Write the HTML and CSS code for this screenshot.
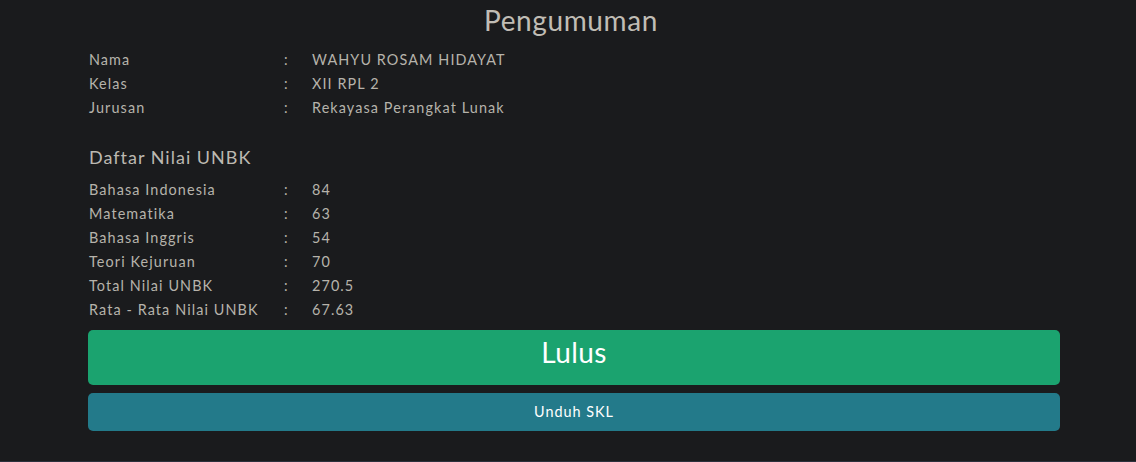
FILE: index.html
```html
<!DOCTYPE html>
<html lang="id">
<head>
<meta charset="utf-8">
<title>Pengumuman</title>
<link rel="stylesheet" href="styles.css">
</head>
<body>
<main class="page">
  <h1 class="title">Pengumuman</h1>
  <div class="rows">
    <div class="row"><span class="label">Nama</span><span class="colon">:</span><span class="value">WAHYU ROSAM HIDAYAT</span></div>
    <div class="row"><span class="label">Kelas</span><span class="colon">:</span><span class="value">XII RPL 2</span></div>
    <div class="row"><span class="label">Jurusan</span><span class="colon">:</span><span class="value">Rekayasa Perangkat Lunak</span></div>
  </div>
  <h2 class="section">Daftar Nilai UNBK</h2>
  <div class="rows">
    <div class="row"><span class="label">Bahasa Indonesia</span><span class="colon">:</span><span class="value">84</span></div>
    <div class="row"><span class="label">Matematika</span><span class="colon">:</span><span class="value">63</span></div>
    <div class="row"><span class="label">Bahasa Inggris</span><span class="colon">:</span><span class="value">54</span></div>
    <div class="row"><span class="label">Teori Kejuruan</span><span class="colon">:</span><span class="value">70</span></div>
    <div class="row"><span class="label">Total Nilai UNBK</span><span class="colon">:</span><span class="value">270.5</span></div>
    <div class="row"><span class="label">Rata - Rata Nilai UNBK</span><span class="colon">:</span><span class="value">67.63</span></div>
  </div>
  <div class="result">Lulus</div>
  <a class="download" href="#">Unduh SKL</a>
</main>
<div class="footer-line"></div>
</body>
</html>
```
FILE: styles.css
```css
html, body {
  margin: 0;
  padding: 0;
  background: #1a1b1d;
}
body {
  font-family: "Lato", "Noto Sans", sans-serif;
  font-size: 14.4px;
  letter-spacing: 1.1px;
  color: #b6b3ab;
  height: 462px;
  overflow: hidden;
  display: flex;
  flex-direction: column;
}
.page {
  width: 972px;
  margin-left: 88px;
  flex: 1;
}
.title {
  margin: 0;
  height: 40px;
  line-height: 40px;
  font-size: 28px;
  font-weight: 400;
  letter-spacing: 0.6px;
  text-align: center;
  color: #c0bdb5;
  padding-right: 6px;
}
.rows {
  display: flex;
  flex-direction: column;
  margin-top: 8px;
}
.row {
  display: grid;
  grid-template-columns: 195px 28px 1fr;
  line-height: 24px;
  padding-left: 1px;
}
.colon {
  letter-spacing: 0;
}
.section {
  margin: 25px 0 0;
  padding-left: 1px;
  font-size: 18px;
  font-weight: 400;
  letter-spacing: 1px;
  line-height: 24px;
  color: #bcb9b1;
}
.section + .rows {
  margin-top: 9px;
}
.result {
  margin-top: 8px;
  height: 55px;
  border-radius: 5px;
  background: #1ba36f;
  color: #ffffff;
  font-size: 28px;
  letter-spacing: 0.4px;
  line-height: 44px;
  text-align: center;
}
.download {
  display: block;
  margin-top: 8px;
  height: 38px;
  line-height: 38px;
  border-radius: 5px;
  background: #237a8a;
  color: #ffffff;
  letter-spacing: 1px;
  text-align: center;
  text-decoration: none;
}
.footer-line {
  height: 1px;
  background: #2c313d;
}
```
